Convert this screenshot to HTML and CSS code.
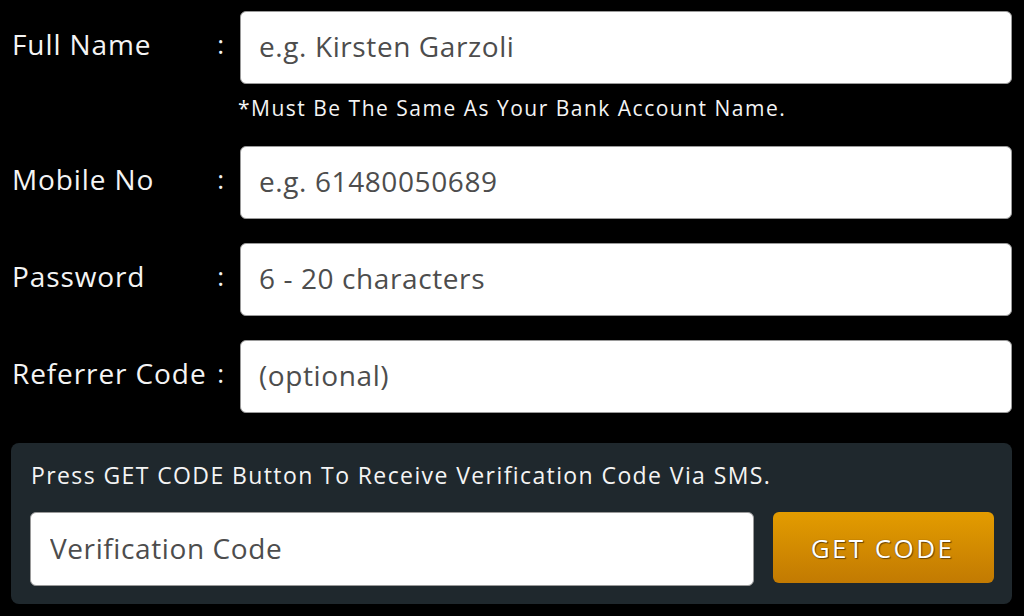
FILE: index.html
```html
<!DOCTYPE html>
<html lang="en">

<head>
  <meta charset="UTF-8">
  <meta name="viewport" content="width=device-width, initial-scale=1.0">
  <title>Register</title>

  <link rel="stylesheet" href="styles.css">
</head>

<body>
  <form class="register">
    <div class="field">
      <label class="label">Full Name <span class="colon">:</span></label>
      <input class="input" type="text" placeholder="e.g. Kirsten Garzoli">
    </div>
    <p class="hint">*Must Be The Same As Your Bank Account Name.</p>

    <div class="field">
      <label class="label">Mobile No <span class="colon">:</span></label>
      <input class="input" type="tel" placeholder="e.g. 61480050689">
    </div>

    <div class="field">
      <label class="label">Password <span class="colon">:</span></label>
      <input class="input" type="password" placeholder="6 - 20 characters">
    </div>

    <div class="field">
      <label class="label">Referrer Code <span class="colon">:</span></label>
      <input class="input" type="text" placeholder="(optional)">
    </div>

    <div class="verify">
      <p class="verify-tip">Press GET CODE Button To Receive Verification Code Via SMS.</p>
      <div class="verify-row">
        <input class="input code" type="text" placeholder="Verification Code">
        <button class="button get-code" type="button">GET CODE</button>
      </div>
    </div>
  </form>
</body>

</html>
```

FILE: styles.css
```css
* {
  box-sizing: border-box;
}

body {
  margin: 0;
  background-color: #000;
  font-family: "Open Sans", "Noto Sans", sans-serif;
  color: #f4f4f4;
}

.register {
  padding: 11px 12px 0 11px;
}

.field {
  display: flex;
  align-items: center;
  margin-bottom: 24px;
}

.label {
  display: flex;
  justify-content: space-between;
  align-items: center;
  width: 212px;
  margin-right: 16px;
  margin-left: 1px;
  margin-top: -8px;
  font-size: 28px;
  letter-spacing: 0.9px;
}

.colon {
  font-size: 26px;
  letter-spacing: 0;
}

.input {
  flex: 1;
  height: 73px;
  padding: 0 18px 3px;
  border: 1px solid #9a9a9a;
  border-radius: 6px;
  outline: none;
  background-color: #fff;
  font-family: inherit;
  font-size: 28px;
  letter-spacing: 0.6px;
  color: #333;
}

.input::placeholder {
  color: #4d4d4d;
}

.hint {
  margin: -12px 0 0 227px;
  height: 50px;
  font-size: 21px;
  letter-spacing: 1.5px;
  line-height: 24px;
}

.verify {
  margin-top: 30px;
  padding: 18px 18px 18px 19px;
  border-radius: 8px;
  background-color: #1f282d;
}

.verify-tip {
  margin: 0 0 23px 1px;
  font-size: 23px;
  letter-spacing: 1.4px;
  line-height: 28px;
}

.verify-row {
  display: flex;
  align-items: flex-start;
}

.input.code {
  height: 74px;
  padding-left: 19px;
}

.button {
  outline: none;
  border: none;
  cursor: pointer;
  font-family: inherit;
}

.get-code {
  width: 221px;
  height: 71px;
  margin-left: 19px;
  padding-left: 4px;
  border-radius: 6px;
  background: linear-gradient(#e39c00, #c27a02);
  font-size: 26px;
  letter-spacing: 2.4px;
  color: #fff;
  text-shadow: 0 0 1px #5a3a00, 1px 1px 1px #6b4500;
}
```
